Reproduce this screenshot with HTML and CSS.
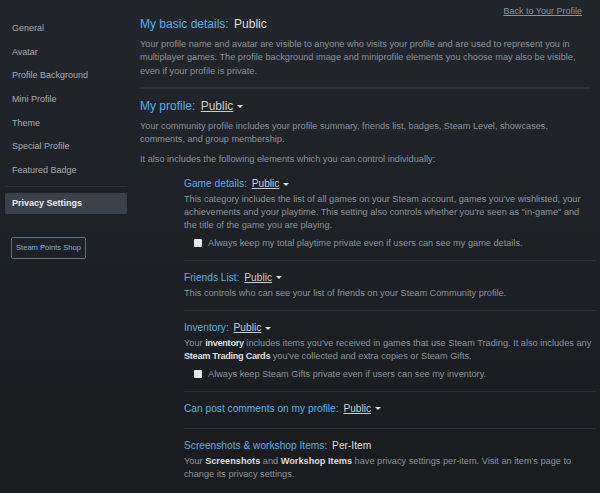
FILE: index.html
```html
<!DOCTYPE html>
<html lang="en">
<head>
    <meta charset="UTF-8">
    <meta name="viewport" content="width=device-width, initial-scale=1.0">
    <title>Privacy Settings</title>
    <link rel="stylesheet" href="styles.css">
</head>
<body>
    <div class="page">
        <div class="sidebar">
            <a class="nav-item" href="#">General</a>
            <a class="nav-item" href="#">Avatar</a>
            <a class="nav-item" href="#">Profile Background</a>
            <a class="nav-item" href="#">Mini Profile</a>
            <a class="nav-item" href="#">Theme</a>
            <a class="nav-item" href="#">Special Profile</a>
            <a class="nav-item" href="#">Featured Badge</a>
            <div class="nav-sep"></div>
            <a class="nav-item active" href="#">Privacy Settings</a>
            <a class="points-btn" href="#">Steam Points Shop</a>
        </div>

        <div class="main">
            <div class="back-row"><a class="back-link" href="#">Back to Your Profile</a></div>

            <div class="section first">
                <div class="heading">My basic details: <span class="value">Public</span></div>
                <p class="desc">Your profile name and avatar are visible to anyone who visits your profile and are used to represent you in multiplayer games. The profile background image and miniprofile elements you choose may also be visible, even if your profile is private.</p>
            </div>

            <div class="section">
                <div class="heading">My profile: <span class="dropdown">Public</span><span class="caret"></span></div>
                <p class="desc intro">Your community profile includes your profile summary, friends list, badges, Steam Level, showcases, comments, and group membership.</p>
                <p class="desc intro gap">It also includes the following elements which you can control individually:</p>

                <div class="subs">
                    <div class="sub">
                        <div class="sub-heading">Game details: <span class="dropdown">Public</span><span class="caret"></span></div>
                        <p class="desc">This category includes the list of all games on your Steam account, games you've wishlisted, your achievements and your playtime. This setting also controls whether you're seen as "in-game" and the title of the game you are playing.</p>
                        <label class="check"><span class="box"></span>Always keep my total playtime private even if users can see my game details.</label>
                    </div>

                    <div class="sub">
                        <div class="sub-heading">Friends List: <span class="dropdown">Public</span><span class="caret"></span></div>
                        <p class="desc">This controls who can see your list of friends on your Steam Community profile.</p>
                    </div>

                    <div class="sub">
                        <div class="sub-heading">Inventory: <span class="dropdown">Public</span><span class="caret"></span></div>
                        <p class="desc wide">Your <b>inventory</b> includes items you've received in games that use Steam Trading. It also includes any <b>Steam Trading Cards</b> you've collected and extra copies or Steam Gifts.</p>
                        <label class="check"><span class="box"></span>Always keep Steam Gifts private even if users can see my inventory.</label>
                    </div>

                    <div class="sub">
                        <div class="sub-heading">Can post comments on my profile: <span class="dropdown">Public</span><span class="caret"></span></div>
                    </div>

                    <div class="sub last">
                        <div class="sub-heading">Screenshots &amp; workshop Items: <span class="value">Per-Item</span></div>
                        <p class="desc">Your <b>Screenshots</b> and <b>Workshop Items</b> have privacy settings per-item. Visit an item's page to change its privacy settings.</p>
                    </div>
                </div>
            </div>
        </div>
    </div>
</body>
</html>
```

FILE: styles.css
```css
body {
    margin: 0;
    font-family: "Liberation Sans", Arial, sans-serif;
    background: linear-gradient(to bottom, #22262c 0%, #1c1f23 60%, #191b1e 100%);
    min-height: 493px;
    color: #8b929a;
}
a {
    text-decoration: none;
}
.page {
    display: flex;
}

/* left navigation */
.sidebar {
    width: 122px;
    padding: 16px 0 0 5px;
    display: flex;
    flex-direction: column;
    flex-shrink: 0;
}
.nav-item {
    display: flex;
    align-items: center;
    height: 23.7px;
    padding-left: 7px;
    font-size: 9px;
    color: #a6a9ad;
}
.nav-sep {
    height: 1px;
    background: #2e333a;
    margin: 4px 0 6px;
}
.nav-item.active {
    height: 21px;
    background: #3b414a;
    border-radius: 2px;
    color: #eceded;
    font-weight: bold;
}
.points-btn {
    align-self: flex-start;
    margin: 23px 0 0 6px;
    height: 20px;
    padding: 0 4px;
    display: flex;
    align-items: center;
    border: 1px solid #5b6f86;
    border-radius: 2px;
    font-size: 7.6px;
    color: #69b2ea;
}

/* content */
.main {
    flex: 1;
    padding: 0 4px 0 13px;
}
.back-row {
    text-align: right;
    padding: 2px 14px 0 0;
    line-height: 14px;
    height: 14px;
}
.back-link {
    font-size: 9px;
    color: #8b929a;
    text-decoration: underline;
}
.section {
    padding-top: 9px;
}
.section.first {
    padding-top: 0;
    padding-bottom: 9px;
    margin-right: 6px;
    border-bottom: 2px solid #2c3138;
}
.heading {
    font-size: 12px;
    line-height: 16px;
    color: #57aee7;
    margin-bottom: 6px;
}
.sub-heading {
    font-size: 10.2px;
    line-height: 16px;
    margin-bottom: 1px;
    color: #57aee7;
}
.value {
    color: #dcdedf;
    margin-left: 2px;
}
.dropdown {
    color: #c8cdd2;
    text-decoration: underline;
    margin-left: 2px;
}
.caret {
    display: inline-block;
    width: 0;
    height: 0;
    margin-left: 4px;
    vertical-align: middle;
    border-left: 3px solid transparent;
    border-right: 3px solid transparent;
    border-top: 3px solid #dcdedf;
}
.desc {
    margin: 0;
    font-size: 9.2px;
    line-height: 13.3px;
}
.desc.intro {
    padding-right: 6px;
}
.desc.gap {
    margin-top: 7px;
}
.desc b {
    color: #dcdedf;
}
.subs {
    padding-left: 44px;
    padding-top: 9px;
}
.sub {
    padding-bottom: 10px;
    margin-bottom: 9px;
    border-bottom: 1px solid #2c3138;
}
.sub .desc {
    padding-right: 8px;
}
.sub .desc.wide {
    padding-right: 0;
}
.desc.wide b {
    letter-spacing: -0.3px;
}
.sub.last {
    border-bottom: none;
}
.check {
    display: flex;
    align-items: center;
    margin: 3px 0 0 10px;
    font-size: 9.2px;
    line-height: 14px;
    color: #8b929a;
}
.box {
    width: 8px;
    height: 8px;
    background: #e6e6e6;
    border-radius: 1px;
    margin-right: 6px;
}
```
